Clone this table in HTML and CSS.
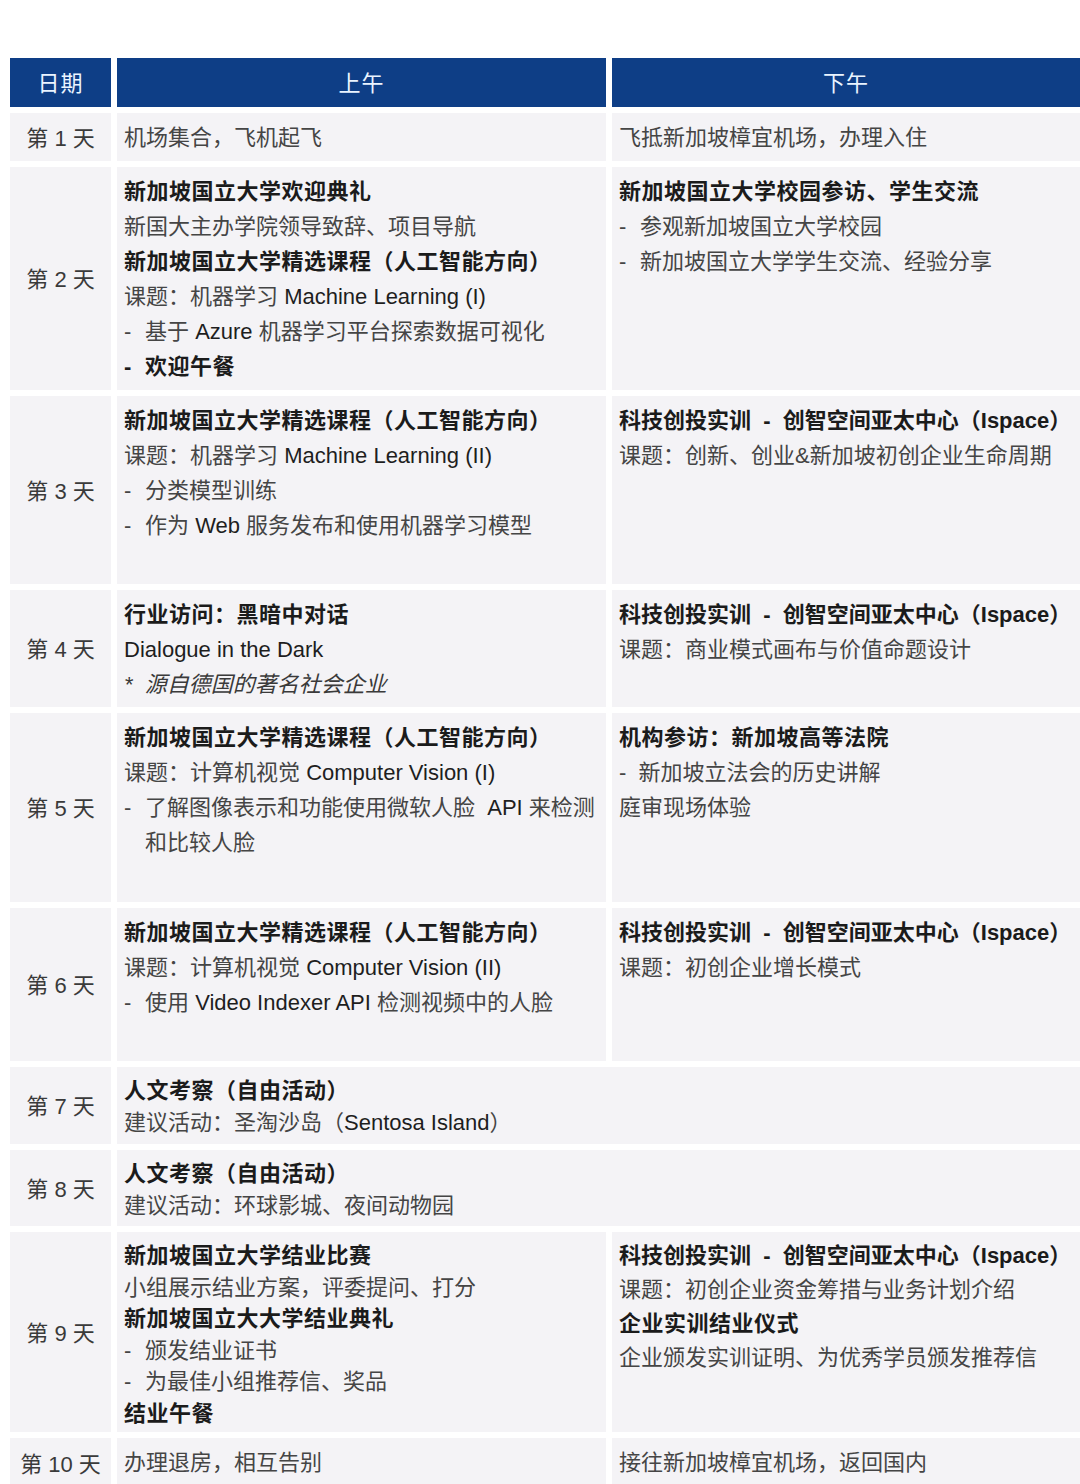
FILE: index.html
```html
<!DOCTYPE html>
<html lang="zh-CN">
<head>
<meta charset="utf-8">
<title>行程安排</title>
<link rel="stylesheet" href="styles.css">
</head>
<body>
<div class="page">
  <div class="schedule">
    <div class="hd">日期</div>
    <div class="hd">上午</div>
    <div class="hd">下午</div>

    <div class="day">第 1 天</div>
    <div class="cell"><p class="r">机场集合，飞机起飞</p></div>
    <div class="cell pm"><p class="r">飞抵新加坡樟宜机场，办理入住</p></div>

    <div class="day">第 2 天</div>
    <div class="cell">
      <p class="b">新加坡国立大学欢迎典礼</p>
      <p class="r">新国大主办学院领导致辞、项目导航</p>
      <p class="b">新加坡国立大学精选课程（人工智能方向）</p>
      <p class="r">课题：机器学习 <span class="lat">Machine Learning (I)</span></p>
      <p class="r li"><span class="dash">-</span><span>基于 <span class="lat">Azure</span> 机器学习平台探索数据可视化</span></p>
      <p class="b li"><span class="dash">-</span><span>欢迎午餐</span></p>
    </div>
    <div class="cell pm">
      <p class="b">新加坡国立大学校园参访、学生交流</p>
      <p class="r li"><span class="dash">-</span><span>参观新加坡国立大学校园</span></p>
      <p class="r li"><span class="dash">-</span><span>新加坡国立大学学生交流、经验分享</span></p>
    </div>

    <div class="day">第 3 天</div>
    <div class="cell">
      <p class="b">新加坡国立大学精选课程（人工智能方向）</p>
      <p class="r">课题：机器学习 <span class="lat">Machine Learning (II)</span></p>
      <p class="r li"><span class="dash">-</span><span>分类模型训练</span></p>
      <p class="r li"><span class="dash">-</span><span>作为 <span class="lat">Web</span> 服务发布和使用机器学习模型</span></p>
    </div>
    <div class="cell pm">
      <p class="b tight">科技创投实训 &nbsp;- &nbsp;创智空间亚太中心（Ispace）</p>
      <p class="r">课题：创新、创业&amp;新加坡初创企业生命周期</p>
    </div>

    <div class="day">第 4 天</div>
    <div class="cell">
      <p class="b">行业访问：黑暗中对话</p>
      <p class="r lat">Dialogue in the Dark</p>
      <p class="r it">* &nbsp;源自德国的著名社会企业</p>
    </div>
    <div class="cell pm">
      <p class="b tight">科技创投实训 &nbsp;- &nbsp;创智空间亚太中心（Ispace）</p>
      <p class="r">课题：商业模式画布与价值命题设计</p>
    </div>

    <div class="day">第 5 天</div>
    <div class="cell">
      <p class="b">新加坡国立大学精选课程（人工智能方向）</p>
      <p class="r">课题：计算机视觉 <span class="lat">Computer Vision (I)</span></p>
      <p class="r li"><span class="dash">-</span><span>了解图像表示和功能使用微软人脸 &nbsp;<span class="lat">API</span> 来检测<br>和比较人脸</span></p>
    </div>
    <div class="cell pm">
      <p class="b">机构参访：新加坡高等法院</p>
      <p class="r">- &nbsp;新加坡立法会的历史讲解</p>
      <p class="r">庭审现场体验</p>
    </div>

    <div class="day">第 6 天</div>
    <div class="cell">
      <p class="b">新加坡国立大学精选课程（人工智能方向）</p>
      <p class="r">课题：计算机视觉 <span class="lat">Computer Vision (II)</span></p>
      <p class="r li"><span class="dash">-</span><span>使用 <span class="lat">Video Indexer API</span> 检测视频中的人脸</span></p>
    </div>
    <div class="cell pm">
      <p class="b tight">科技创投实训 &nbsp;- &nbsp;创智空间亚太中心（Ispace）</p>
      <p class="r">课题：初创企业增长模式</p>
    </div>

    <div class="day">第 7 天</div>
    <div class="cell wide compact">
      <p class="b">人文考察（自由活动）</p>
      <p class="r">建议活动：圣淘沙岛（<span class="lat">Sentosa Island</span>）</p>
    </div>

    <div class="day">第 8 天</div>
    <div class="cell wide compact">
      <p class="b">人文考察（自由活动）</p>
      <p class="r">建议活动：环球影城、夜间动物园</p>
    </div>

    <div class="day">第 9 天</div>
    <div class="cell compact">
      <p class="b">新加坡国立大学结业比赛</p>
      <p class="r">小组展示结业方案，评委提问、打分</p>
      <p class="b">新加坡国立大大学结业典礼</p>
      <p class="r li"><span class="dash">-</span><span>颁发结业证书</span></p>
      <p class="r li"><span class="dash">-</span><span>为最佳小组推荐信、奖品</span></p>
      <p class="b">结业午餐</p>
    </div>
    <div class="cell pm mid">
      <p class="b tight">科技创投实训 &nbsp;- &nbsp;创智空间亚太中心（Ispace）</p>
      <p class="r">课题：初创企业资金筹措与业务计划介绍</p>
      <p class="b">企业实训结业仪式</p>
      <p class="r">企业颁发实训证明、为优秀学员颁发推荐信</p>
    </div>

    <div class="day">第 10 天</div>
    <div class="cell"><p class="r">办理退房，相互告别</p></div>
    <div class="cell pm"><p class="r">接往新加坡樟宜机场，返回国内</p></div>
  </div>
</div>
</body>
</html>
```

FILE: styles.css
```css
html, body {
  margin: 0;
  padding: 0;
  background: #ffffff;
}

.page {
  padding: 58px 0 0 10px;
  height: 1426px;
  overflow: hidden;
  font-family: "Liberation Sans", "Noto Sans CJK SC", sans-serif;
  font-size: 22px;
}

.schedule {
  display: grid;
  grid-template-columns: 101px 489px 468px;
  grid-template-rows: 49px 48px 223px 188px 117px 189px 153px 77px 76px 200px 50px;
  gap: 6px;
}

.hd {
  background: #0e3e86;
  color: #eaf4ff;
  display: flex;
  align-items: center;
  justify-content: center;
  padding-bottom: 3px;
  font-size: 22px;
  letter-spacing: 1px;
}

.day {
  background: #f4f3f6;
  color: #3a3a3a;
  display: flex;
  align-items: center;
  justify-content: center;
  padding-bottom: 3px;
  white-space: nowrap;
}

.cell {
  background: #f4f3f6;
  padding: 7px 2px 0 7px;
}

.cell.pm {
  padding-right: 0;
}

.cell.wide {
  grid-column: 2 / span 2;
}

.cell p {
  margin: 0;
  line-height: 35px;
  white-space: nowrap;
}

.cell.compact {
  padding-top: 8px;
}

.cell.compact p {
  line-height: 31.6px;
}

.cell.mid p {
  line-height: 34px;
}

.b {
  font-weight: 700;
  color: #1b1b1b;
  letter-spacing: 0.5px;
}

.b.tight {
  letter-spacing: 0;
}

.r {
  font-weight: 400;
  color: #454545;
}

.lat {
  color: #1e1e1e;
}

.it {
  font-style: italic;
  color: #3a3a3a;
}

.li {
  display: flex;
}

.dash {
  flex: 0 0 21px;
  width: 21px;
}
```
